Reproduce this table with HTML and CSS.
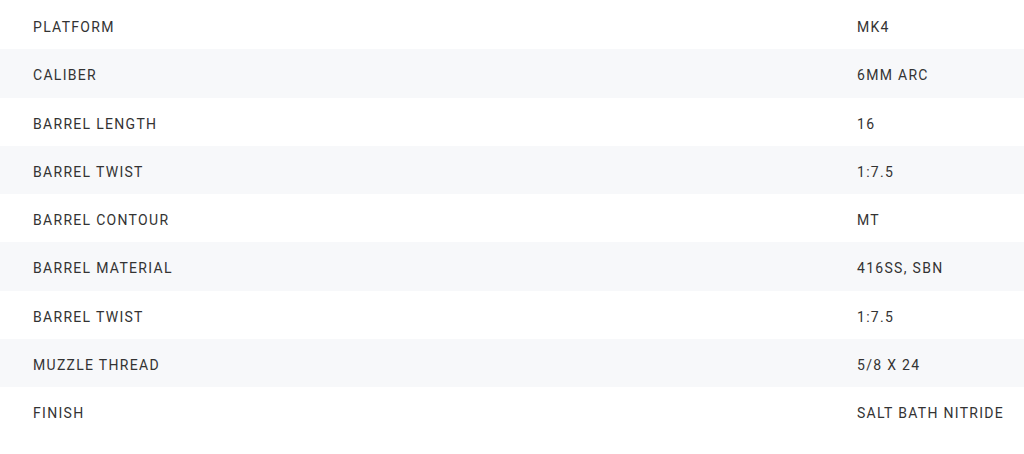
FILE: index.html
```html
<!DOCTYPE html>
<html lang="en">
<head>
<meta charset="UTF-8" />
<title>Specifications</title>
<link rel="stylesheet" href="styles.css">
</head>
<body>

<table class="specs">
  <tbody>
    <tr><td class="label">Platform</td><td class="value">MK4</td></tr>
    <tr><td class="label">Caliber</td><td class="value">6mm ARC</td></tr>
    <tr><td class="label">Barrel Length</td><td class="value">16</td></tr>
    <tr><td class="label">Barrel Twist</td><td class="value">1:7.5</td></tr>
    <tr><td class="label">Barrel Contour</td><td class="value">MT</td></tr>
    <tr><td class="label">Barrel Material</td><td class="value">416SS, SBN</td></tr>
    <tr><td class="label">Barrel Twist</td><td class="value">1:7.5</td></tr>
    <tr><td class="label">Muzzle Thread</td><td class="value">5/8 x 24</td></tr>
    <tr><td class="label">Finish</td><td class="value">Salt Bath Nitride</td></tr>
  </tbody>
</table>

</body>
</html>
```

FILE: styles.css
```css
body {
  margin: 0;
  padding-top: 1px;
  background: #fff;
  color: #333;
  font-family: Roboto, "Liberation Sans", sans-serif;
  font-size: 14px;
}
.specs {
  width: 100%;
  border-collapse: collapse;
}
.specs tr {
  height: 48.25px;
}
.specs tr:nth-child(even) {
  background: #f7f8fa;
}
.specs td {
  padding: 4px 0 0 0;
  text-transform: uppercase;
  letter-spacing: 1.3px;
  vertical-align: middle;
}
.specs .label {
  width: 824px;
  padding-left: 33px;
}
```
